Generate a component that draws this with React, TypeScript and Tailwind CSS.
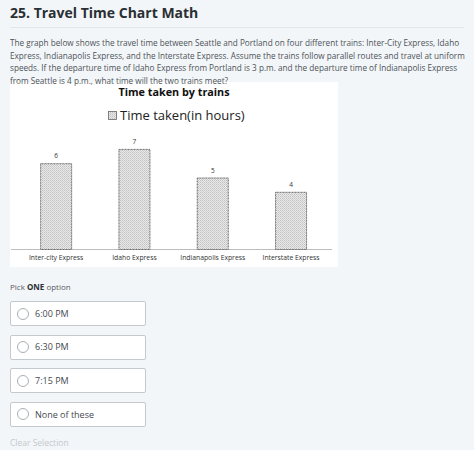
const bars = [
  { label: "Inter-city Express", value: 6 },
  { label: "Idaho Express", value: 7 },
  { label: "Indianapolis Express", value: 5 },
  { label: "Interstate Express", value: 4 },
];

const options = ["6:00 PM", "6:30 PM", "7:15 PM", "None of these"];

const TravelChart = () => {
  const baseline = 167;
  const unit = 14.3;
  const step = 78.3;
  const left = 7;
  return (
    <svg width="328" height="185" viewBox="0 0 328 185" className="block">
      <defs>
        <pattern id="dots" width="2" height="2" patternUnits="userSpaceOnUse">
          <rect width="2" height="2" fill="#e8e8e8" />
          <rect width="1" height="1" fill="#c2c2c2" />
          <rect x="1" y="1" width="1" height="1" fill="#d0d0d0" />
        </pattern>
      </defs>
      <text
        x="164"
        y="14"
        textAnchor="middle"
        fontFamily="'Open Sans', sans-serif"
        fontWeight="700"
        fontSize="10.8"
        fill="#111"
      >
        Time taken by trains
      </text>
      <rect x="98.5" y="29.5" width="8" height="8" fill="url(#dots)" stroke="#666" strokeWidth="0.8" />
      <text
        x="110"
        y="38"
        fontFamily="'Open Sans', sans-serif"
        fontSize="13"
        fill="#222"
      >
        Time taken(in hours)
      </text>
      <line x1="1" y1={baseline + 0.5} x2="322" y2={baseline + 0.5} stroke="#bdbdbd" strokeWidth="1" />
      {bars.map((b, i) => {
        const cx = left + step * i + step / 2;
        const h = b.value * unit;
        return (
          <g key={b.label}>
            <rect
              x={cx - 15.5}
              y={baseline - h + 0.5}
              width="31"
              height={h}
              fill="url(#dots)"
              stroke="#666"
              strokeWidth="1"
              strokeDasharray="1 0.5"
            />
            <text
              x={cx}
              y={baseline - h - 5}
              textAnchor="middle"
              fontFamily="'Open Sans', sans-serif"
              fontSize="6.5"
              fill="#333"
            >
              {b.value}
            </text>
            <text
              x={cx}
              y={baseline + 11}
              textAnchor="middle"
              fontFamily="'Open Sans', sans-serif"
              fontSize="6.8"
              fill="#333"
            >
              {b.label}
            </text>
          </g>
        );
      })}
    </svg>
  );
};

export default function App() {
  return (
    <div
      className="w-[474px] h-[450px] overflow-hidden bg-[#f3f6f8] pl-[10px] pr-[4px] text-[#3d4347]"
      style={{ fontFamily: "'Open Sans', sans-serif" }}
    >
      <div className="pt-[3px] pb-[5px] mr-[6px] border-b border-[#e3e7ea]">
        <h1 className="text-[14px] leading-[19px] font-bold text-[#2a2f33]">25. Travel Time Chart Math</h1>
      </div>
      <p className="mt-[9px] whitespace-nowrap text-[8.2px] leading-[12.5px] text-[#4d5358]">
        The graph below shows the travel time between Seattle and Portland on four different trains: Inter-City Express, Idaho
        <br />
        Express, Indianapolis Express, and the Interstate Express. Assume the trains follow parallel routes and travel at uniform
        <br />
        speeds. If the departure time of Idaho Express from Portland is 3 p.m. and the departure time of Indianapolis Express
        <br />
        from Seattle is 4 p.m., what time will the two trains meet?
      </p>
      <div className="-mt-[5px] w-[328px] bg-white">
        <TravelChart />
      </div>
      <div className="mt-[14px] text-[8px] leading-[12px] text-[#555b60]">
        Pick <span className="font-bold text-[#2a2f33]">ONE</span> option
      </div>
      <div className="mt-[8px] flex flex-col gap-[8.6px]">
        {options.map((o) => (
          <div
            key={o}
            className="flex h-[25px] w-[136px] items-center gap-[6px] rounded-[2px] border border-[#c4c9cd] bg-white pl-[6px]"
          >
            <span className="h-[12px] w-[12px] rounded-full border border-[#a9afb3] bg-white" />
            <span className="text-[9px] text-[#444a4f]">{o}</span>
          </div>
        ))}
      </div>
      <div className="mt-[10px] text-[8.5px] leading-[12px] text-[#c3c9ce]">Clear Selection</div>
    </div>
  );
}
